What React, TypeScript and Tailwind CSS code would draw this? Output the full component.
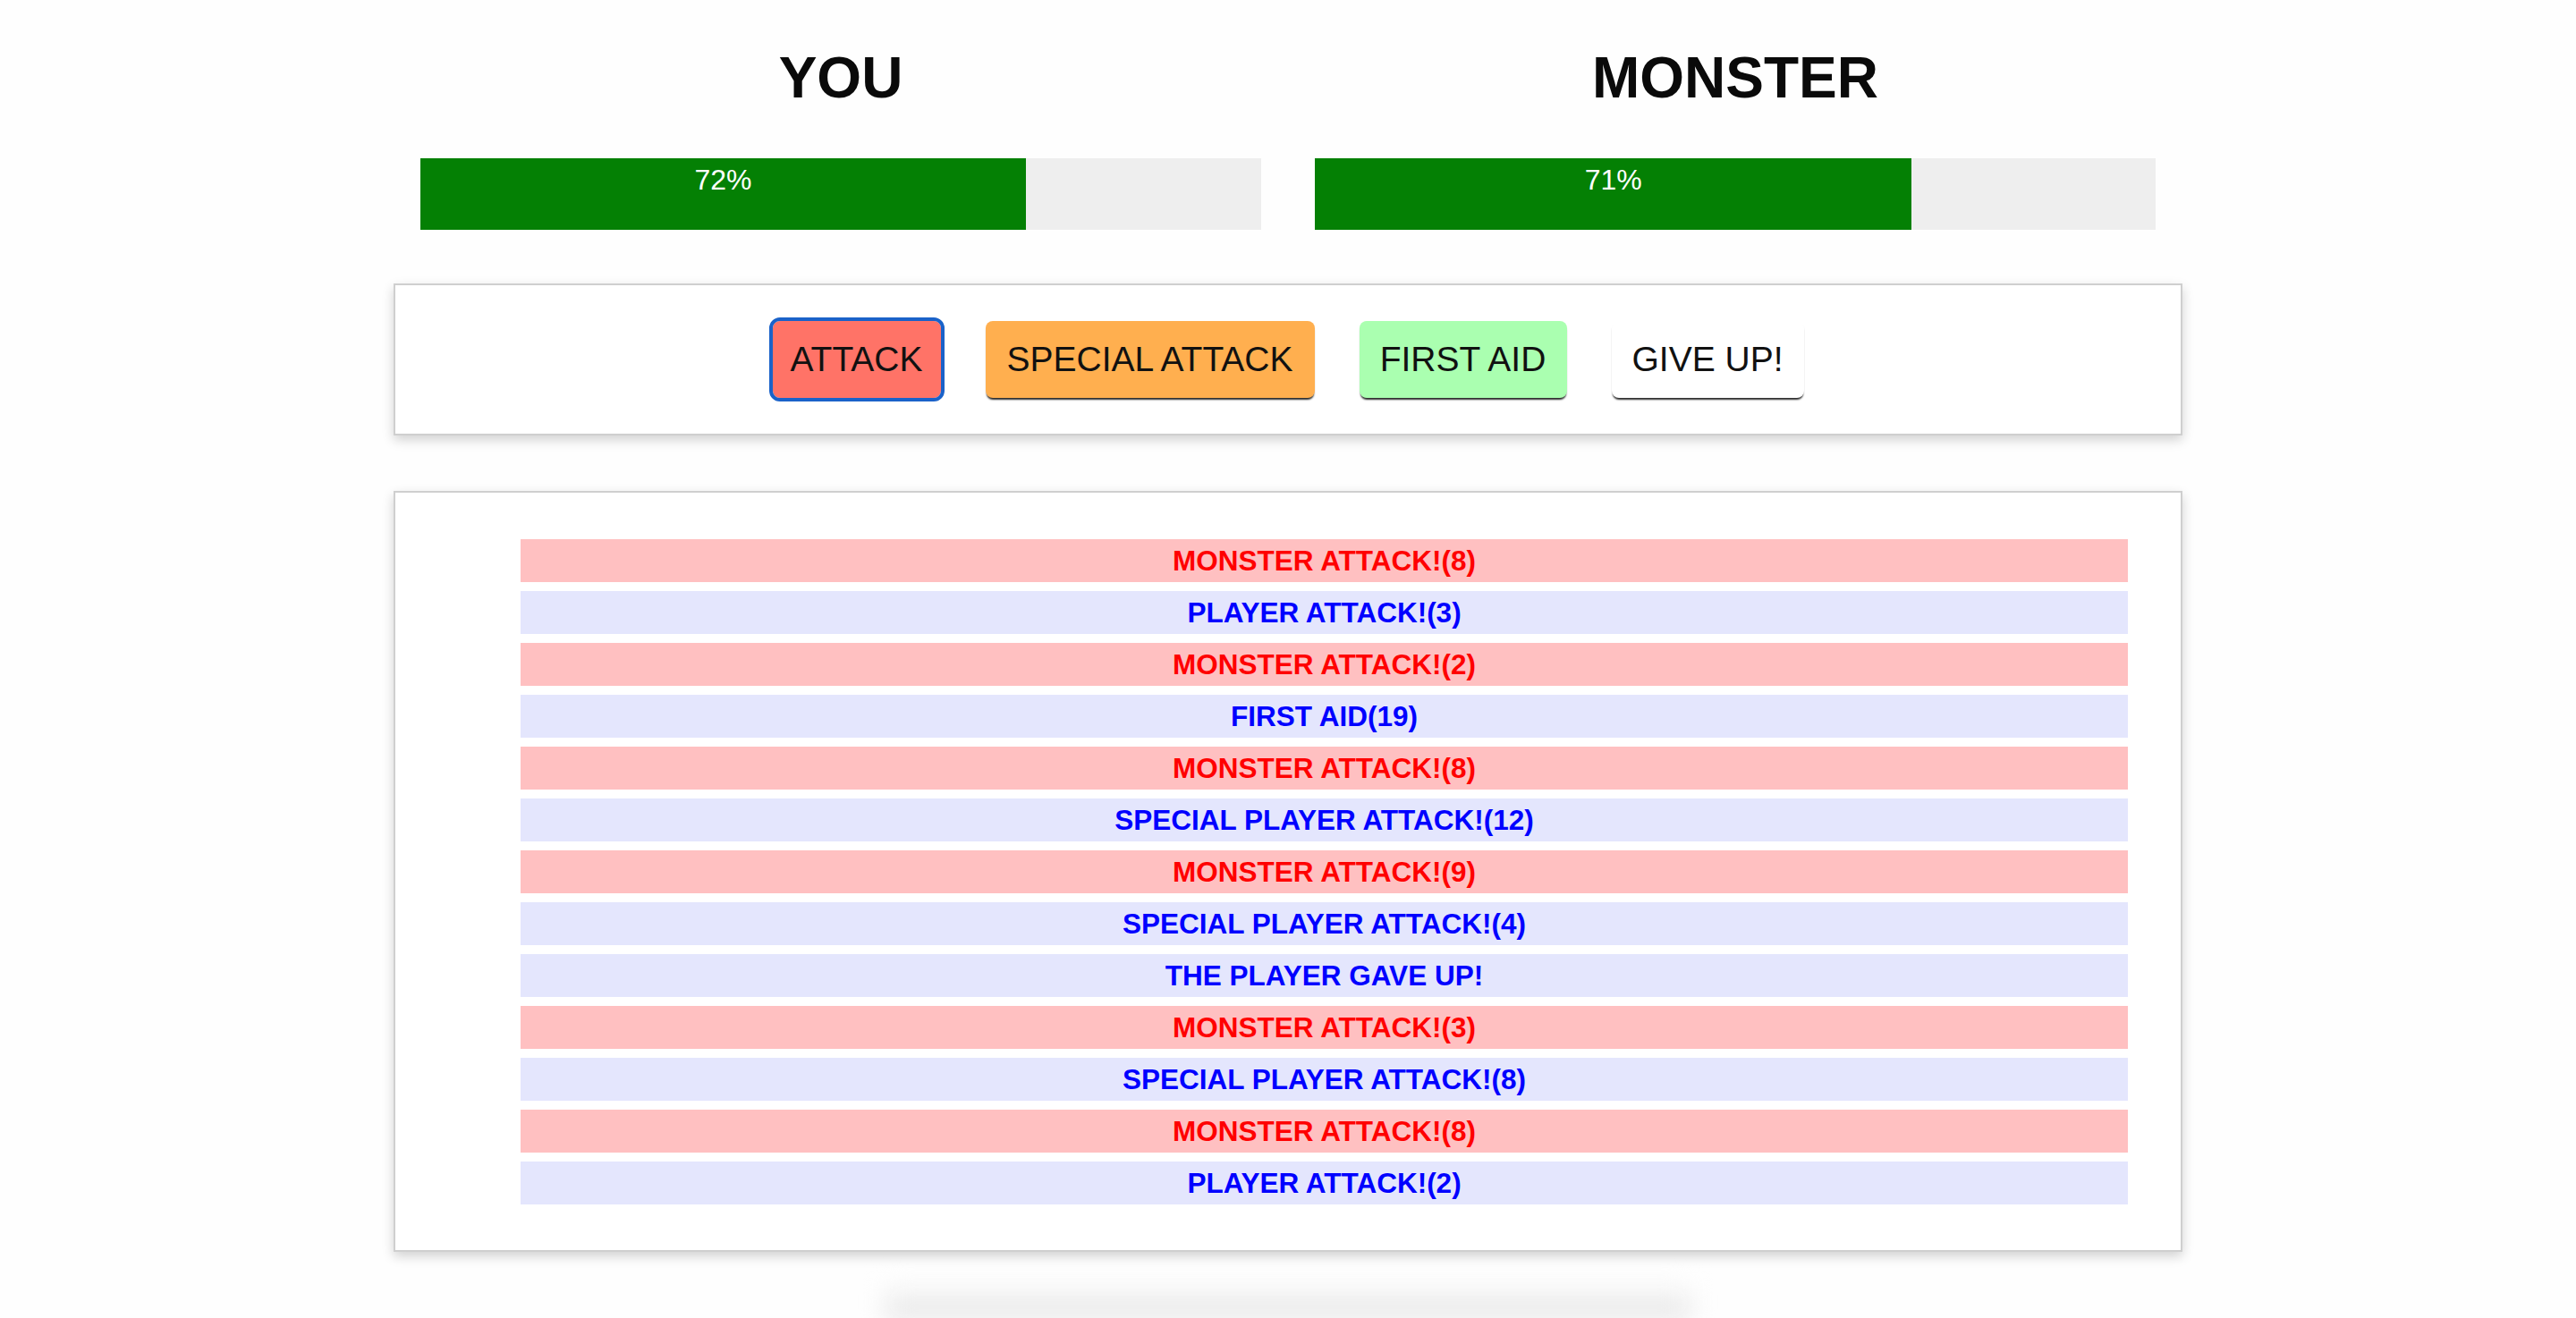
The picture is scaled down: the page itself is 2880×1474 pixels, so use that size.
import React from "react";

const logs: { who: "monster" | "player"; text: string }[] = [
  { who: "monster", text: "MONSTER ATTACK!(8)" },
  { who: "player", text: "PLAYER ATTACK!(3)" },
  { who: "monster", text: "MONSTER ATTACK!(2)" },
  { who: "player", text: "FIRST AID(19)" },
  { who: "monster", text: "MONSTER ATTACK!(8)" },
  { who: "player", text: "SPECIAL PLAYER ATTACK!(12)" },
  { who: "monster", text: "MONSTER ATTACK!(9)" },
  { who: "player", text: "SPECIAL PLAYER ATTACK!(4)" },
  { who: "player", text: "THE PLAYER GAVE UP!" },
  { who: "monster", text: "MONSTER ATTACK!(3)" },
  { who: "player", text: "SPECIAL PLAYER ATTACK!(8)" },
  { who: "monster", text: "MONSTER ATTACK!(8)" },
  { who: "player", text: "PLAYER ATTACK!(2)" },
];

function Health({ title, pct }: { title: string; pct: number }) {
  return (
    <div className="flex w-[940px] flex-col">
      <h1 className="text-center text-[64px] leading-[64px] font-bold text-[#0a0a0a]">{title}</h1>
      <div className="mt-[58px] h-[80px] w-full bg-[#eeeeee]">
        <div
          className="h-full bg-[#048004] text-center text-[32px] leading-[48px] text-white"
          style={{ width: `${pct}%` }}
        >
          {pct}%
        </div>
      </div>
    </div>
  );
}

export default function App() {
  return (
    <div
      className="min-h-[1474px] overflow-hidden bg-[#fefefe] pt-[55px]"
      style={{ fontFamily: '"Liberation Sans", Arial, sans-serif' }}
    >
      <div className="mx-auto flex w-[2000px] flex-col">
        <div className="flex justify-center gap-[60px]">
          <Health title="YOU" pct={72} />
          <Health title="MONSTER" pct={71} />
        </div>

        <div className="mt-[60px] flex justify-center gap-[50px] border-2 border-[#cfcfcf] bg-white py-[40px] shadow-[0_5px_12px_rgba(0,0,0,0.18)]">
          <button className="h-[86px] w-[188px] rounded-[8px] bg-[#ff7367] text-[39px] text-[#111] outline-[4px] outline-[#1a62c9] outline-solid">
            ATTACK
          </button>
          <button className="h-[86px] w-[368px] rounded-[8px] bg-[#ffaf4f] text-[39px] text-[#111] shadow-[0_3px_2px_-1px_rgba(0,0,0,0.85)]">
            SPECIAL ATTACK
          </button>
          <button className="h-[86px] w-[232px] rounded-[8px] bg-[#aaffb0] text-[39px] text-[#111] shadow-[0_3px_2px_-1px_rgba(0,0,0,0.85)]">
            FIRST AID
          </button>
          <button className="h-[86px] w-[215px] rounded-[8px] bg-white text-[39px] text-[#111] shadow-[0_3px_2px_-1px_rgba(0,0,0,0.85)]">
            GIVE UP!
          </button>
        </div>

        <div className="mt-[62px] border-2 border-[#cfcfcf] bg-white pt-[52px] pr-[59px] pb-[51px] pl-[140px] shadow-[0_5px_12px_rgba(0,0,0,0.18)]">
          <ul className="flex flex-col gap-[10px]">
            {logs.map((l, i) => (
              <li
                key={i}
                className={
                  l.who === "monster"
                    ? "h-[48px] bg-[#ffc0c1] text-center text-[31.5px] leading-[48px] font-bold text-[#ff0000]"
                    : "h-[48px] bg-[#e4e6fd] text-center text-[31.5px] leading-[48px] font-bold text-[#0000ff]"
                }
              >
                {l.text}
              </li>
            ))}
          </ul>
        </div>
      </div>
      <div className="mx-auto mt-[38px] h-[36px] w-[900px] bg-linear-to-b from-[#fefefe] to-[#dcdcdc] blur-[14px]" />
    </div>
  );
}
